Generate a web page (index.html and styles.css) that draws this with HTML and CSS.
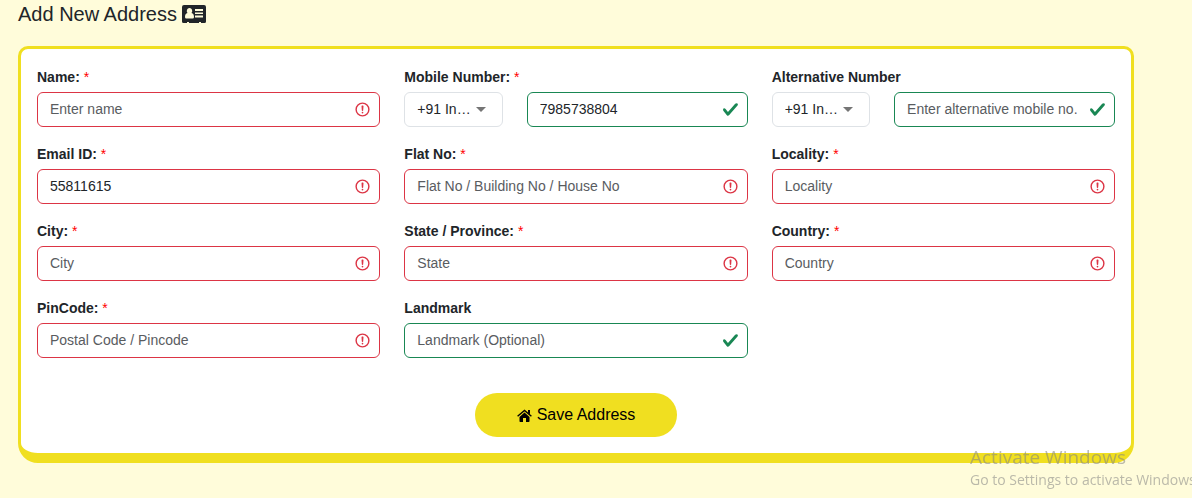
FILE: index.html
```
<!DOCTYPE html>
<html lang="en">
<head>
<meta charset="utf-8">
<meta name="viewport" content="width=device-width, initial-scale=1">
<title>Add New Address</title>
<link rel="stylesheet" href="styles.css">
</head>
<body>
<svg class="sprite" aria-hidden="true">
  <symbol id="error" viewBox="0 0 12 12">
    <circle cx="6" cy="6" r="4.5" fill="none" stroke="#dc3545"/>
    <path d="M5.8 3.6h.4L6 6.5z" fill="none" stroke="#dc3545" stroke-linejoin="round"/>
    <circle cx="6" cy="8.2" r=".6" fill="#dc3545"/>
  </symbol>
  <symbol id="check" viewBox="0 0 8 8">
    <path fill="#198754" d="M2.3 6.73.6 4.53c-.4-1.04.46-1.4 1.1-.8l1.1 1.4 3.4-3.8c.6-.63 1.6-.27 1.2.7l-4 4.6c-.43.5-.8.4-1.1.1z"/>
  </symbol>
  <symbol id="caret" viewBox="0 0 10 5">
    <path fill="#757575" d="M0 0l5 5 5-5z"/>
  </symbol>
</svg>

<main class="page">
  <h1 class="title">Add New Address
    <svg class="title-icon" viewBox="0 0 24 18" aria-hidden="true">
      <path fill="#212529" d="M2 0h20a2 2 0 0 1 2 2v14.500a1.500 1.500 0 0 1-1.500 1.500H19v-1h-2v1H7v-1H5v1H1.500A1.500 1.500 0 0 1 0 16.500V2a2 2 0 0 1 2-2z"/>
      <path fill="#fffcda" d="M7.500 3a2.700 2.900 0 0 1 2 4.900c1.700.3 2.500 1.900 2.500 4.100 0 .8-.5 1.500-1.300 1.500H4.300C3.500 13.500 3 12.800 3 12c0-2.200.8-3.800 2.500-4.100A2.700 2.900 0 0 1 7.500 3zM13 4h8v2h-8zM13 7.500h8v1.500h-8zM13 10.500h8V12.500h-8z"/>
    </svg>
  </h1>

  <form class="card" novalidate>
    <div class="fields">
      <div class="field">
        <label class="label" for="name">Name: <span class="required">*</span></label>
        <div class="control">
          <input class="input invalid" id="name" type="text" placeholder="Enter name">
          <svg class="status" aria-hidden="true"><use href="#error"/></svg>
        </div>
      </div>
      <div class="field">
        <label class="label" for="mobile">Mobile Number: <span class="required">*</span></label>
        <div class="phone">
          <div class="control">
            <select class="input select" aria-label="Mobile country code"><option>+91 In…</option></select>
            <svg class="caret" aria-hidden="true"><use href="#caret"/></svg>
          </div>
          <div class="control">
            <input class="input valid" id="mobile" type="tel" value="7985738804">
            <svg class="status" aria-hidden="true"><use href="#check"/></svg>
          </div>
        </div>
      </div>
      <div class="field">
        <label class="label" for="alternative">Alternative Number</label>
        <div class="phone">
          <div class="control">
            <select class="input select" aria-label="Alternative country code"><option>+91 In…</option></select>
            <svg class="caret" aria-hidden="true"><use href="#caret"/></svg>
          </div>
          <div class="control">
            <input class="input valid" id="alternative" type="tel" placeholder="Enter alternative mobile no.">
            <svg class="status" aria-hidden="true"><use href="#check"/></svg>
          </div>
        </div>
      </div>
      <div class="field">
        <label class="label" for="email">Email ID: <span class="required">*</span></label>
        <div class="control">
          <input class="input invalid" id="email" type="email" value="55811615">
          <svg class="status" aria-hidden="true"><use href="#error"/></svg>
        </div>
      </div>
      <div class="field">
        <label class="label" for="flat">Flat No: <span class="required">*</span></label>
        <div class="control">
          <input class="input invalid" id="flat" type="text" placeholder="Flat No / Building No / House No">
          <svg class="status" aria-hidden="true"><use href="#error"/></svg>
        </div>
      </div>
      <div class="field">
        <label class="label" for="locality">Locality: <span class="required">*</span></label>
        <div class="control">
          <input class="input invalid" id="locality" type="text" placeholder="Locality">
          <svg class="status" aria-hidden="true"><use href="#error"/></svg>
        </div>
      </div>
      <div class="field">
        <label class="label" for="city">City: <span class="required">*</span></label>
        <div class="control">
          <input class="input invalid" id="city" type="text" placeholder="City">
          <svg class="status" aria-hidden="true"><use href="#error"/></svg>
        </div>
      </div>
      <div class="field">
        <label class="label" for="state">State / Province: <span class="required">*</span></label>
        <div class="control">
          <input class="input invalid" id="state" type="text" placeholder="State">
          <svg class="status" aria-hidden="true"><use href="#error"/></svg>
        </div>
      </div>
      <div class="field">
        <label class="label" for="country">Country: <span class="required">*</span></label>
        <div class="control">
          <input class="input invalid" id="country" type="text" placeholder="Country">
          <svg class="status" aria-hidden="true"><use href="#error"/></svg>
        </div>
      </div>
      <div class="field">
        <label class="label" for="pincode">PinCode: <span class="required">*</span></label>
        <div class="control">
          <input class="input invalid" id="pincode" type="text" placeholder="Postal Code / Pincode">
          <svg class="status" aria-hidden="true"><use href="#error"/></svg>
        </div>
      </div>
      <div class="field">
        <label class="label" for="landmark">Landmark</label>
        <div class="control">
          <input class="input valid" id="landmark" type="text" placeholder="Landmark (Optional)">
          <svg class="status" aria-hidden="true"><use href="#check"/></svg>
        </div>
      </div>
    </div>
    <button class="save" type="button">
      <svg class="save-icon" viewBox="0 0 15 13" aria-hidden="true">
        <path d="M7.500 3.600 12.500 8v4.200a.8.8 0 0 1-.8.8H9V9H6v4H3.300a.8.800 0 0 1-.8-.8V8z"/>
        <path d="M.6 7.200 7.500 1.400 14.400 7.200" fill="none" stroke="#000" stroke-width="1.400"/>
        <path d="M11 1h2v4.500l-2-1.700z"/>
      </svg>
      Save Address
    </button>
  </form>
</main>

<aside class="watermark">
  <p class="watermark-title">Activate Windows</p>
  <p class="watermark-text">Go to Settings to activate Windows.</p>
</aside>
</body>
</html>
```
FILE: styles.css
```
* {
  box-sizing: border-box;
}

body {
  margin: 0;
  background: #fffcda;
  color: #212529;
  font-family: "Liberation Sans", Arial, sans-serif;
  font-size: 14px;
  line-height: 21px;
}

.sprite {
  position: absolute;
  width: 0;
  height: 0;
}

.page {
  padding: 0 58px 35px 18px;
}

.title {
  display: flex;
  align-items: center;
  gap: 5px;
  margin: 0 0 18px;
  font-size: 20px;
  font-weight: 400;
  line-height: 28px;
}

.title-icon {
  width: 24px;
  height: 18px;
}

.card {
  display: flex;
  flex-direction: column;
  align-items: center;
  gap: 35px;
  padding: 18px 16px 16px;
  background: #fff;
  border: 3px solid #f0df20;
  border-bottom-width: 10px;
  border-radius: 10px 10px 20px 20px;
}

.fields {
  display: grid;
  grid-template-columns: repeat(3, minmax(0, 1fr));
  gap: 17px 24px;
  width: 100%;
}

.label {
  display: block;
  margin-bottom: 4px;
  font-weight: 700;
}

.required {
  color: #f00;
  font-weight: 400;
}

.phone {
  display: grid;
  grid-template-columns: calc((100% - 48px) / 3) minmax(0, 1fr);
  gap: 24px;
}

.control {
  position: relative;
}

.input {
  display: block;
  width: 100%;
  height: 35px;
  margin: 0;
  padding: 5px 36px 7px 12px;
  background: #fff;
  border: 1px solid #dee2e6;
  border-radius: 6px;
  color: #212529;
  font: inherit;
  outline: 0;
}

.input::placeholder {
  color: #595c5f;
  opacity: 1;
}

.invalid {
  border-color: #dc3545;
}

.valid {
  border-color: #198754;
}

.select {
  appearance: none;
  padding: 6px 28px 6px 12px;
}

.status {
  position: absolute;
  top: 9px;
  right: 9px;
  width: 17px;
  height: 17px;
  pointer-events: none;
}

.caret {
  position: absolute;
  top: 15px;
  right: 17px;
  width: 10px;
  height: 5px;
  pointer-events: none;
}

.save {
  display: flex;
  align-items: center;
  gap: 5px;
  padding: 10px 42px;
  background: #f0df20;
  border: 0;
  border-radius: 22px;
  color: #000;
  font: inherit;
  font-size: 16px;
  line-height: 24px;
}

.save-icon {
  width: 15px;
  height: 13px;
}

.watermark {
  position: fixed;
  top: 444px;
  left: 970px;
  right: 0;
  overflow: hidden;
  color: rgba(130, 130, 130, 0.55);
  font-family: "Open Sans", "Noto Sans", sans-serif;
  white-space: nowrap;
  pointer-events: none;
}

.watermark-title {
  margin: 0;
  font-size: 19px;
  line-height: 26px;
}

.watermark-text {
  margin: 0;
  font-size: 14px;
  line-height: 20px;
}
```
